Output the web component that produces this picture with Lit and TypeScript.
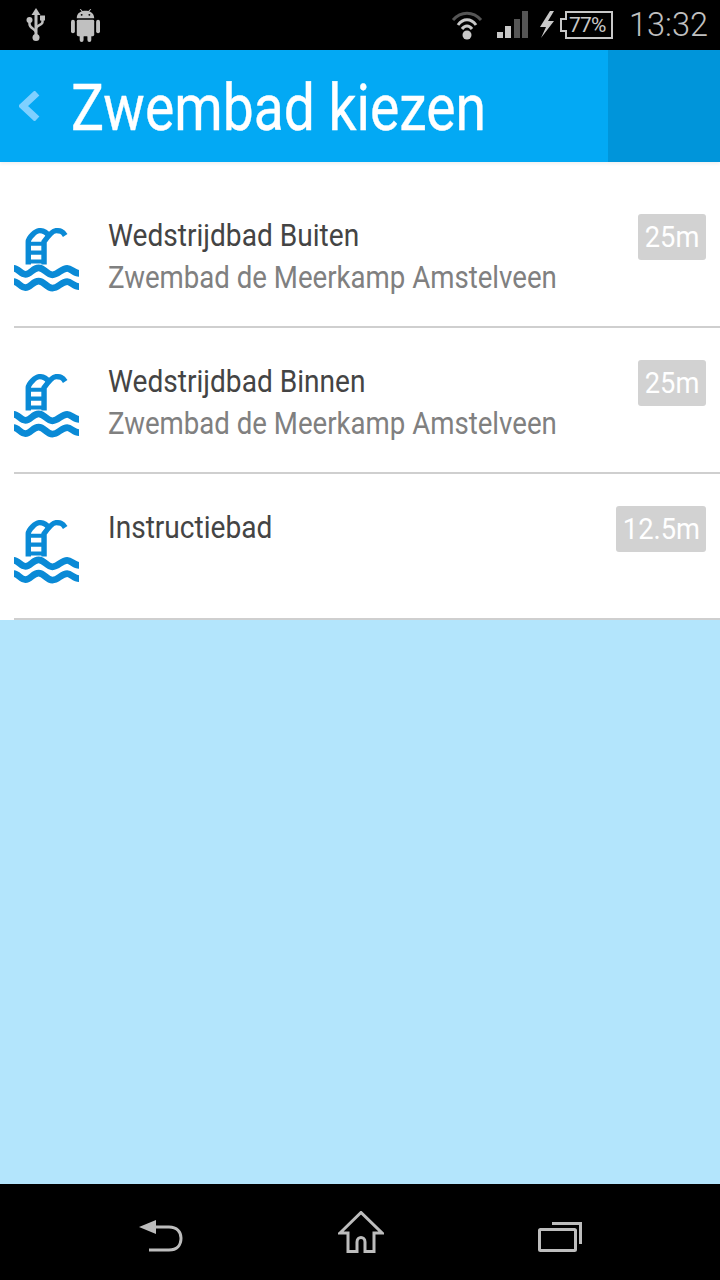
import { LitElement, html, css, svg } from "lit";
import { customElement } from "lit/decorators.js";

const pool = svg`<svg class="pool" width="65" height="65" viewBox="0 0 66 66" fill="none">
  <g stroke="#0a8ad6">
    <path d="M14.500 37V14C14.500 10 22 2.700 26 2.700C29 2.700 32 3 35 7.500" stroke-width="5.500"/>
    <path d="M30.500 37V14C34 9 39 2.700 43 2.700C47 2.700 49 3 52 7.500" stroke-width="5.500"/>
    <path d="M14 16H31M14 25H31M14 34H31" stroke-width="4.200"/>
  </g>
  <path d="M0 41C4 41 7 47 11.500 47C17 47 19 40.500 25 40.500C31 40.500 33 47.500 39 47.500C45 47.500 48 41 54 41C58 41 61 46 66 46" stroke="#0a8ad6" stroke-width="6.800"/>
  <path d="M0 54.500C4 54.500 7 60.500 11.500 60.500C17 60.500 19 54 25 54C31 54 33 61 39 61C45 61 48 54.500 54 54.500C58 54.500 61 59.500 66 59.500" stroke="#0a8ad6" stroke-width="6.800"/>
</svg>`;

const rows = [
  { t: "Wedstrijdbad Buiten", s: "Zwembad de Meerkamp Amstelveen", d: "25m", w: 68 },
  { t: "Wedstrijdbad Binnen", s: "Zwembad de Meerkamp Amstelveen", d: "25m", w: 68 },
  { t: "Instructiebad", s: "", d: "12.5m", w: 90 },
];

@customElement("app-root")
export class AppRoot extends LitElement {
  static styles = css`
    :host { display: flex; flex-direction: column; width: 720px; height: 1280px; background: #b3e5fc; font-family: Roboto, "Liberation Sans", sans-serif; overflow: hidden; }
    .status { height: 50px; background: #000; display: flex; align-items: center; padding: 0 12px 0 26px; box-sizing: border-box; flex: none; }
    .status-left { display: flex; gap: 25px; align-items: center; flex: 1; }
    .status-right { display: flex; align-items: center; }
    .clock { color: #c0c0c0; font-size: 32.500px; font-weight: 300; margin-left: 15px; line-height: 1; }
    .batt { position: relative; width: 56px; height: 28px; margin-left: 3px; }
    .batt span { position: absolute; left: 11px; top: 3px; color: #c8c8c8; font-size: 21px; line-height: 22px; letter-spacing: -0.8px; }
    .header { height: 112px; background: #03a9f4; display: flex; align-items: center; flex: none; position: relative; box-shadow: 0 2px 3px rgba(0, 0, 0, 0.06); }
    .back { margin-left: 19px; flex: none; }
    .title-wrap { flex: 1; margin-left: 30px; padding-top: 4px; }
    .title { display: block; color: #fff; font-size: 65px; line-height: 108px; transform: scaleX(0.85); transform-origin: left center; white-space: nowrap; -webkit-text-stroke: 0.4px #fff; }
    .side { width: 112px; height: 112px; background: #0095da; flex: none; }
    .list { background: #fff; padding-top: 20px; flex: none; height: 458px; box-sizing: border-box; }
    .row { height: 146px; box-sizing: border-box; position: relative; display: flex; padding-left: 14px; }
    .row::after { content: ""; position: absolute; left: 14px; right: 0; bottom: 0; height: 2px; background: #cfcfcf; }
    .pool { margin-top: 46px; flex: none; }
    .texts { flex: 1; margin-left: 29px; padding-top: 32px; min-width: 0; }
    .t, .s { display: block; font-size: 32px; line-height: 42px; white-space: nowrap; transform-origin: left center; }
    .t { color: #444; transform: scaleX(0.878); }
    .s { color: #808080; transform: scaleX(0.863); }
    .badge { margin-top: 32px; margin-right: 14px; height: 46px; background: #d2d2d2; color: #fff; border-radius: 3px; font-size: 30px; line-height: 46px; flex: none; box-sizing: border-box; display: flex; align-items: center; justify-content: center; }
    .badge span { display: block; transform: scaleX(0.91); white-space: nowrap; }
    .fill { flex: 1; }
    .nav { height: 96px; background: #000; flex: none; display: flex; justify-content: space-between; align-items: flex-start; padding: 27px 138px 0 139px; box-sizing: border-box; }
    .nav-back { margin-top: 9px; }
    .nav-recent { margin-top: 11px; }
  `;

  render() {
    return html`
      <div class="status">
        <div class="status-left">
          <svg width="20" height="34" viewBox="0 0 20 34" fill="none">
            <path d="M10 0L5.500 7H14.500Z" fill="#c0c0c0"/>
            <path d="M10 6V29" stroke="#c0c0c0" stroke-width="3"/>
            <circle cx="3.500" cy="12" r="3" fill="#c0c0c0"/>
            <path d="M3.500 12V16C3.500 20 9 21 10 24" stroke="#c0c0c0" stroke-width="2.500"/>
            <rect x="14" y="7.500" width="5" height="5" fill="#c0c0c0"/>
            <path d="M16.500 12V14C16.500 17 11 17 10 20" stroke="#c0c0c0" stroke-width="2.500"/>
            <circle cx="10" cy="29.500" r="3.500" fill="#c0c0c0"/>
          </svg>
          <svg width="29" height="33" viewBox="0 0 30 34" fill="#c0c0c0">
            <path d="M6 9C6 5 9 3 11 2.500L9 0H10L12 2C14 1.500 16 1.500 18 2L20 0H21L19 2.500C21 3 24 5 24 9.500H6Z"/>
            <rect x="6" y="11" width="18" height="17" rx="1.500"/>
            <rect x="0" y="11" width="4" height="14" rx="2"/>
            <rect x="26" y="11" width="4" height="14" rx="2"/>
            <rect x="9" y="26" width="4" height="8" rx="2"/>
            <rect x="17" y="26" width="4" height="8" rx="2"/>
            <circle cx="11" cy="6" r="1" fill="#000"/><circle cx="19" cy="6" r="1" fill="#000"/>
          </svg>
        </div>
        <div class="status-right">
          <svg width="32" height="30" viewBox="0 0 32 30" fill="none" style="margin-right:14px">
            <path d="M2 10C10 1 22 1 30 10" stroke="#555" stroke-width="3"/>
            <path d="M7 15C12 8 20 8 25 15" stroke="#c8c8c8" stroke-width="3"/>
            <path d="M11 19C14 15 18 15 21 19" stroke="#c8c8c8" stroke-width="3"/>
            <circle cx="16" cy="25" r="4.500" fill="#c8c8c8"/>
          </svg>
          <svg width="32" height="28" viewBox="0 0 32 28" style="margin-right:10px">
            <rect x="0" y="21" width="6" height="6" fill="#c8c8c8"/>
            <rect x="8" y="15" width="6" height="12" fill="#c8c8c8"/>
            <rect x="17" y="8" width="6" height="19" fill="#555"/>
            <rect x="25" y="0" width="6" height="27" fill="#555"/>
          </svg>
          <svg width="16" height="28" viewBox="0 0 16 28" fill="#c8c8c8">
            <path d="M11 0L1 16H7L2 27L15 10H9L15 0Z"/>
          </svg>
          <div class="batt">
            <svg width="56" height="28" viewBox="0 0 56 28" fill="none">
              <path d="M8 1H54V27H8V20H3V8H8Z" stroke="#c8c8c8" stroke-width="2"/>
            </svg>
            <span>77%</span>
          </div>
          <div class="clock">13:32</div>
        </div>
      </div>
      <div class="header">
        <svg class="back" width="22" height="30" viewBox="0 0 22 30">
          <path d="M18 2L4 15L18 28" fill="none" stroke="#7fd0ff" stroke-width="7"/>
        </svg>
        <div class="title-wrap"><span class="title">Zwembad kiezen</span></div>
        <div class="side"></div>
      </div>
      <div class="list">
        ${rows.map(r => html`
          <div class="row">
            ${pool}
            <div class="texts">
              <span class="t">${r.t}</span>
              ${r.s ? html`<span class="s">${r.s}</span>` : ""}
            </div>
            <div class="badge" style="width:${r.w}px"><span>${r.d}</span></div>
          </div>`)}
      </div>
      <div class="fill"></div>
      <div class="nav">
        <svg class="nav-back" width="44" height="32" viewBox="0 0 44 32" fill="none">
          <path d="M0 7L17 0V14Z" fill="#bdbdbd"/>
          <path d="M15 7H30C38 7 42 12 42 18C42 25 38 30 30 30H10" stroke="#bdbdbd" stroke-width="3"/>
        </svg>
        <svg width="46" height="42" viewBox="0 0 46 42" fill="none">
          <path d="M2 22L23 1.500L44 22H36V40.500H27V31C27 25 19 25 19 31V40.500H10V22Z" stroke="#bdbdbd" stroke-width="3"/>
        </svg>
        <svg class="nav-recent" width="44" height="30" viewBox="0 0 44 30" fill="none">
          <path d="M14 1.500H42.500V22" stroke="#bdbdbd" stroke-width="3"/>
          <rect x="1.500" y="7.500" width="36" height="21" rx="1" stroke="#bdbdbd" stroke-width="3"/>
        </svg>
      </div>
    `;
  }
}
